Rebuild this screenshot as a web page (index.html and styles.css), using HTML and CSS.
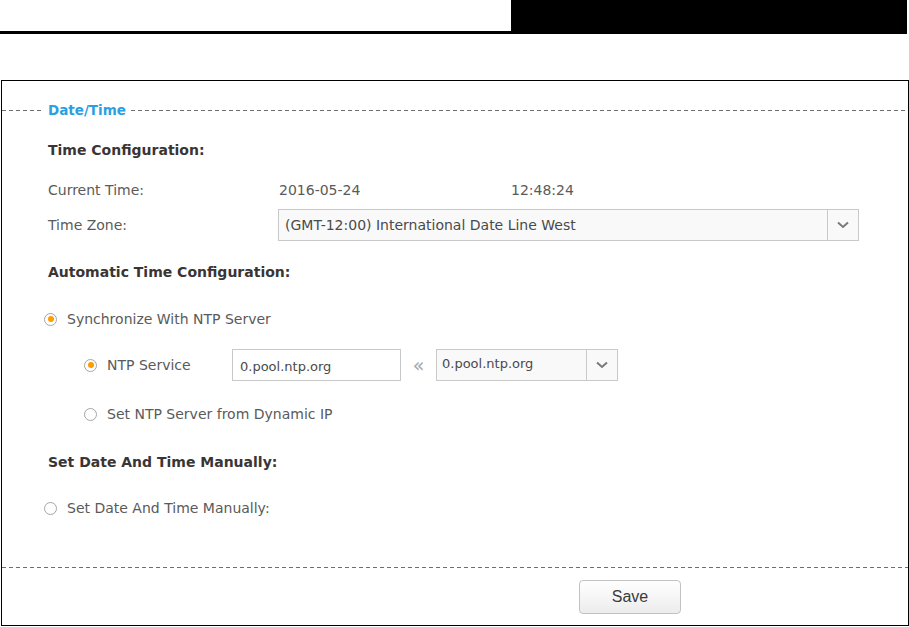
FILE: index.html
```html
<!DOCTYPE html>
<html>
<head>
<meta charset="utf-8">
<title>Date/Time</title>
<link rel="stylesheet" href="styles.css">
</head>
<body>
<div class="top">
  <div class="top-left"></div>
  <div class="top-right"></div>
</div>
<div class="panel">
  <div class="legend">
    <span class="dash lead"></span>
    <span class="legend-title">Date/Time</span>
    <span class="dash fill"></span>
  </div>
  <div class="body">
    <div class="row heading h1">Time Configuration:</div>
    <div class="row r-current">
      <span class="label">Current Time:</span>
      <span class="date">2016-05-24</span>
      <span class="time">12:48:24</span>
    </div>
    <div class="row r-zone">
      <span class="label">Time Zone:</span>
      <div class="select wide">
        <span class="select-text">(GMT-12:00) International Date Line West</span>
        <span class="select-arrow"><svg width="12" height="8" viewBox="0 0 12 8"><polyline points="1,1.5 6,6 11,1.5" fill="none" stroke="#7a7a7a" stroke-width="2"/></svg></span>
      </div>
    </div>
    <div class="row heading h2">Automatic Time Configuration:</div>
    <div class="row r-sync">
      <span class="radio on"></span>
      <span class="opt">Synchronize With NTP Server</span>
    </div>
    <div class="row r-ntp sub">
      <span class="radio on"></span>
      <span class="opt ntp-label">NTP Service</span>
      <div class="input">0.pool.ntp.org</div>
      <span class="arrows">&laquo;</span>
      <div class="select small">
        <span class="select-text top">0.pool.ntp.org</span>
        <span class="select-arrow"><svg width="12" height="8" viewBox="0 0 12 8"><polyline points="1,1.5 6,6 11,1.5" fill="none" stroke="#7a7a7a" stroke-width="2"/></svg></span>
      </div>
    </div>
    <div class="row r-dyn sub">
      <span class="radio"></span>
      <span class="opt">Set NTP Server from Dynamic IP</span>
    </div>
    <div class="row heading h3">Set Date And Time Manually:</div>
    <div class="row r-manual">
      <span class="radio"></span>
      <span class="opt">Set Date And Time Manually:</span>
    </div>
  </div>
  <div class="footer">
    <button class="save">Save</button>
  </div>
</div>
</body>
</html>
```

FILE: styles.css
```css
html, body {
  margin: 0;
  padding: 0;
  background: #fff;
}
body {
  font-family: "DejaVu Sans", Verdana, sans-serif;
  font-size: 14px;
  color: #5a5a5a;
  width: 909px;
}
.top {
  display: flex;
  height: 34px;
}
.top-left {
  width: 511px;
  height: 31px;
  border-bottom: 3px solid #000;
}
.top-right {
  width: 396px;
  height: 34px;
  background: #000;
}
.panel {
  margin: 46px 0 0 1px;
  width: 906px;
  border: 1px solid #000;
  box-sizing: content-box;
}
.dash {
  height: 1px;
  background-image: linear-gradient(to right, #6e6e6e 4px, transparent 4px);
  background-size: 7px 1px;
  background-repeat: repeat-x;
}
.legend {
  margin-top: 19px;
  height: 20px;
  display: flex;
  align-items: center;
}
.dash.lead {
  width: 41px;
}
.dash.fill {
  flex: 1;
}
.legend-title {
  color: #2c9fe0;
  font-weight: bold;
  font-size: 13.5px;
  padding: 0 5px 0 5px;
  line-height: 20px;
}
.body {
  padding: 10px 0 42px 42px;
}
.row {
  display: flex;
  align-items: center;
}
.heading {
  font-weight: bold;
  color: #3a3535;
  padding-left: 4px;
}
.h1 { height: 40px; }
.h2 { height: 62px; }
.h3 { height: 58px; }
.r-current { height: 39px; }
.r-zone { height: 32px; }
.r-sync { height: 32px; }
.r-ntp { height: 60px; }
.r-dyn { height: 38px; }
.r-manual { height: 34px; }
.label {
  width: 230px;
  padding-left: 4px;
  flex: none;
}
.date {
  width: 232px;
  padding-left: 1px;
}
.select {
  display: flex;
  box-sizing: border-box;
  height: 32px;
  border: 1px solid #c9c9c9;
  background: #f9f9f9;
}
.select.wide {
  width: 581px;
}
.select.small {
  width: 182px;
}
.select-text {
  flex: 1;
  padding-left: 6px;
  display: flex;
  align-items: center;
  color: #4a4a4a;
}
.select.small .select-text {
  font-size: 13px;
  align-items: flex-start;
  padding-top: 6px;
  padding-left: 5px;
}
.select-arrow {
  width: 30px;
  border-left: 1px solid #c9c9c9;
  display: flex;
  align-items: center;
  justify-content: center;
}
.radio {
  width: 13px;
  height: 13px;
  box-sizing: border-box;
  border: 1px solid #a5a5a5;
  border-radius: 50%;
  background: #fff;
  display: flex;
  align-items: center;
  justify-content: center;
  flex: none;
  margin-right: 10px;
}
.radio.on::after {
  content: "";
  width: 6px;
  height: 6px;
  border-radius: 50%;
  background: #ff9c00;
}
.sub {
  padding-left: 40px;
}
.ntp-label {
  width: 125px;
}
.input {
  width: 169px;
  height: 32px;
  box-sizing: border-box;
  border: 1px solid #c9c9c9;
  background: #fff;
  font-size: 13px;
  color: #4a4a4a;
  padding: 9px 0 0 7px;
}
.arrows {
  width: 35px;
  text-align: center;
  color: #a8a8a8;
  font-size: 19px;
  line-height: 20px;
}
.footer {
  height: 58px;
  box-sizing: border-box;
  padding: 13px 0 0 577px;
  background-image: linear-gradient(to right, #6e6e6e 4px, transparent 4px);
  background-size: 7px 1px;
  background-repeat: repeat-x;
  background-position: 0 0;
}
.save {
  width: 102px;
  height: 34px;
  border: 1px solid #c2c2c2;
  border-radius: 4px;
  background: linear-gradient(#ffffff, #ececec);
  font-family: "Liberation Sans", Arial, sans-serif;
  font-size: 16px;
  color: #3a3a3a;
  padding: 0;
  margin: 0;
}
```
